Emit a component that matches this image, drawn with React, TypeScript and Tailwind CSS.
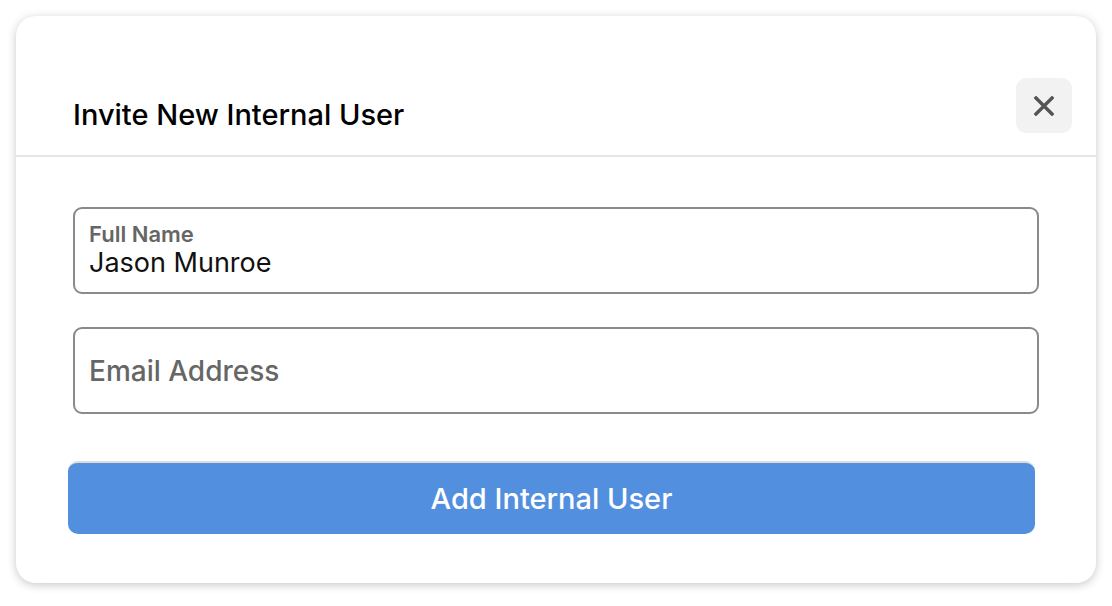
import { useState } from 'react';

const font = { fontFamily: 'Inter, "Noto Sans", sans-serif' };

function CloseIcon() {
	return (
		<svg width="20" height="20" viewBox="0 0 20 20" fill="none">
			<path d="M2 2L18 18M18 2L2 18" stroke="#555555" strokeWidth="3.4" strokeLinecap="square" />
		</svg>
	);
}

export default function App() {
	const [name, setName] = useState('Jason Munroe');
	const [email, setEmail] = useState('');

	return (
		<div className="min-h-screen bg-white p-4" style={font}>
			<div className="flex h-[567px] w-[1080px] flex-col rounded-[20px] bg-white shadow-[0_2px_10px_rgba(0,0,0,0.22)]">
				{/* header */}
				<div className="flex h-[141px] items-start justify-between border-b-2 border-[#e6e6e6] pl-[57px] pr-[24px]">
					<h2 className="pt-[82px] text-[29px] leading-[34px] font-medium text-black">Invite New Internal User</h2>
					<button className="mt-[62px] flex h-[55px] w-[56px] items-center justify-center rounded-[10px] bg-[#f2f2f2]">
						<CloseIcon />
					</button>
				</div>

				{/* body */}
				<div className="flex flex-col px-[57px] pt-[50px]">
					<label className="flex h-[87px] flex-col justify-center rounded-[9px] border-2 border-[#8a8a8a] px-[14px]">
						<span className="text-[22px] leading-[24px] font-semibold text-[#666666]">Full Name</span>
						<input
							className="w-full bg-transparent text-[27px] leading-[34px] text-[#111111] outline-none"
							value={name}
							onChange={(event) => setName(event.target.value)}
						/>
					</label>

					<div className="mt-[33px] flex h-[87px] items-center rounded-[9px] border-2 border-[#8a8a8a] px-[14px]">
						<input
							className="w-full bg-transparent text-[28px] leading-[34px] font-medium text-[#111111] outline-none placeholder:text-[#666666]"
							placeholder="Email Address"
							value={email}
							onChange={(event) => setEmail(event.target.value)}
						/>
					</div>

					<button className="mt-[47px] ml-[-5px] h-[73px] w-[967px] rounded-[10px] border-t-2 border-[#dcdcdc] bg-[#528fde] text-[29px] font-medium text-white">
						Add Internal User
					</button>
				</div>
			</div>
		</div>
	);
}
